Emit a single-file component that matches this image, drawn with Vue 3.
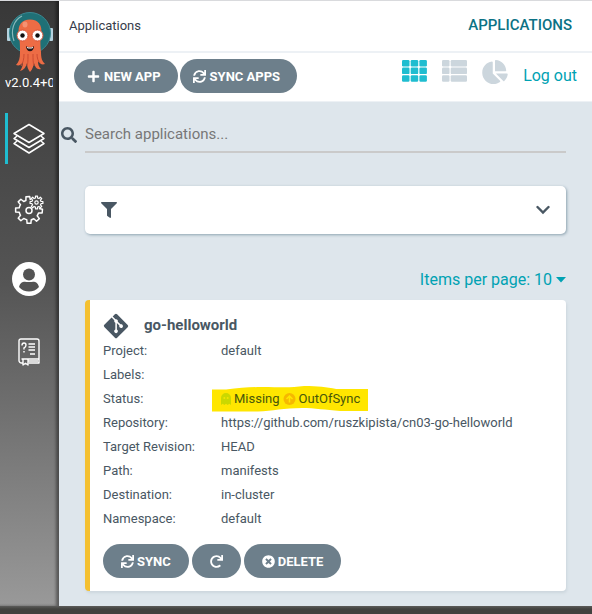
<script setup>
import { ref } from 'vue'

const query = ref('')

const icons = {
  plus: { box: '0 0 448 512', d: 'M416 208H272V64c0-17.67-14.33-32-32-32h-32c-17.67 0-32 14.33-32 32v144H32c-17.67 0-32 14.33-32 32v32c0 17.67 14.33 32 32 32h144v144c0 17.67 14.33 32 32 32h32c17.67 0 32-14.33 32-32V304h144c17.67 0 32-14.33 32-32v-32c0-17.67-14.33-32-32-32z' },
  sync: { box: '0 0 512 512', d: 'M440.65 12.57l4 82.77A247.16 247.16 0 0 0 255.83 8C134.73 8 33.91 94.92 12.29 209.82A12 12 0 0 0 24.09 224h49.05a12 12 0 0 0 11.67-9.26 175.91 175.91 0 0 1 317-56.94l-101.46-4.86a12 12 0 0 0-12.57 12v47.41a12 12 0 0 0 12 12H500a12 12 0 0 0 12-12V12a12 12 0 0 0-12-12h-47.37a12 12 0 0 0-11.98 12.57zM255.83 432a175.61 175.61 0 0 1-146-77.8l101.8 4.87a12 12 0 0 0 12.57-12v-47.4a12 12 0 0 0-12-12H12a12 12 0 0 0-12 12V500a12 12 0 0 0 12 12h47.35a12 12 0 0 0 12-12.6l-4.15-82.57A247.17 247.17 0 0 0 255.83 504c121.11 0 221.93-86.92 243.55-201.82a12 12 0 0 0-11.8-14.18h-49.05a12 12 0 0 0-11.67 9.26A175.86 175.86 0 0 1 255.83 432z' },
  redo: { box: '0 0 512 512', d: 'M500.33 0h-47.41a12 12 0 0 0-12 12.57l4 82.76A247.42 247.42 0 0 0 256 8C119.34 8 7.9 119.53 8 256.19 8.1 393.07 119.1 504 256 504a247.1 247.1 0 0 0 166.18-63.91 12 12 0 0 0 .48-17.43l-34-34a12 12 0 0 0-16.38-.55A176 176 0 1 1 402.1 157.8l-101.53-4.87a12 12 0 0 0-12.57 12v47.41a12 12 0 0 0 12 12h200.33a12 12 0 0 0 12-12V12a12 12 0 0 0-12-12z' },
  remove: { box: '0 0 512 512', d: 'M256 8C119 8 8 119 8 256s111 248 248 248 248-111 248-248S393 8 256 8zm121.6 313.1c4.7 4.7 4.7 12.3 0 17L338 377.6c-4.7 4.7-12.3 4.7-17 0L256 312l-65.1 65.6c-4.7 4.7-12.3 4.7-17 0L134.4 338c-4.7-4.7-4.7-12.3 0-17l65.6-65-65.6-65.1c-4.7-4.7-4.7-12.3 0-17l39.6-39.6c4.7-4.7 12.3-4.7 17 0l65 65.7 65.1-65.6c4.7-4.7 12.3-4.7 17 0l39.6 39.6c4.7 4.7 4.7 12.3 0 17L312 256l65.6 65.1z' },
}

// Outline of a gear: one trapezoid tooth per angle, in degrees, joined along the inner radius.
function gear(cx, cy, outer, inner, angles, inHalf, outHalf) {
  const at = (deg, r) => {
    const a = (deg * Math.PI) / 180
    return `${(cx + r * Math.cos(a)).toFixed(2)} ${(cy + r * Math.sin(a)).toFixed(2)}`
  }
  return angles
    .map((t, i) => `${i ? `A${inner} ${inner} 0 0 1 ` : 'M'}${at(t - inHalf, inner)}L${at(t - outHalf, outer)}L${at(t + outHalf, outer)}L${at(t + inHalf, inner)}`)
    .join('')
}
const bigGear = gear(15, 15, 13.5, 10, [5, 48, 90, 135, 180, 225, 265], 13, 8)
const smallGear = gear(22.5, 7.5, 6.5, 4.6, [0, 45, 90, 135, 180, 225, 270, 315], 13, 9) + 'z'

const toolbar = [
  { icon: 'plus', label: 'NEW APP' },
  { icon: 'sync', label: 'SYNC APPS' },
]

const actions = [
  { icon: 'sync', label: 'SYNC' },
  { icon: 'redo', label: '' },
  { icon: 'remove', label: 'DELETE' },
]

const details = [
  { name: 'Project:', value: 'default' },
  { name: 'Labels:', value: '' },
  { name: 'Status:', status: true },
  { name: 'Repository:', value: 'https://github.com/ruszkipista/cn03-go-helloworld' },
  { name: 'Target Revision:', value: 'HEAD' },
  { name: 'Path:', value: 'manifests' },
  { name: 'Destination:', value: 'in-cluster' },
  { name: 'Namespace:', value: 'default' },
]
</script>

<template>
  <div class="page">
    <div class="shell">
      <nav class="sidebar">
        <svg class="logo" viewBox="0 0 46 62" aria-hidden="true">
          <rect x="0" y="17" width="4" height="13" rx="1" fill="#b5d3df" />
          <rect x="42" y="17" width="4" height="13" rx="1" fill="#b5d3df" />
          <circle cx="23" cy="22" r="20.5" fill="#1f7076" stroke="#3b8791" />
          <path d="M7 30C3 19 7 9 15 5" fill="none" stroke="#8ab9bb" stroke-width="1.2" />
          <path d="M12 24C10 14 15 8.500 23 8.500s13 5.500 11 15.500c-1 7-.5 11 0 17 0 6 1 9 4 12-3 1-5 0-7-3 0 4 1 6 3 8-4 1-6-2-7-6-1 3-1 6-4 9-2-3-3-5-3-9-1 4-3 7-7 8 2-3 3-6 3-9-2 3-4 4-7 3 3-3 4-7 4-12 0-6 0-11-1-18z" fill="#ed6c45" />
          <path d="M17 43c0 5-1 9-3 12M21 43c0 6 0 9-1 12M26 43c0 5 0 9 1 12M30 43c0 4 1 7 3 9" fill="none" stroke="#cc4c32" stroke-width="1" />
          <ellipse cx="18" cy="13.500" rx="2.500" ry="3" fill="#f59272" />
          <circle cx="15.500" cy="24.500" r="5.500" fill="#fff" stroke="#d95438" />
          <circle cx="30.500" cy="24.500" r="5.500" fill="#fff" stroke="#d95438" />
          <circle cx="15.500" cy="24.500" r="2.200" fill="#111" />
          <circle cx="30.500" cy="24.500" r="2.200" fill="#111" />
          <path d="M19 35c3 2 5 2 8 0 0 7-8 7-8 0z" fill="#231719" />
          <path d="M20 36q3 1 6 0v1q-3 1-6 0z" fill="#fff" />
        </svg>
        <span class="version">v2.0.4+0</span>
        <a class="nav-item active" href="#applications" aria-label="Applications">
          <svg width="34" height="34" viewBox="0 0 34 34" fill="none" stroke="#fff" stroke-width="1.5" stroke-linejoin="round" stroke-linecap="round">
            <path d="M17 2.500L32 11.500 17 20.500 2 11.500z" />
            <path d="M4.500 14.500L2 16.500l15 9 15-9-2.500-2" />
            <path d="M4.500 19.500L2 21.500l15 9.500 15-9.500-2.500-2" />
          </svg>
        </a>
        <a class="nav-item" href="#settings" aria-label="Settings">
          <svg width="30" height="30" viewBox="0 0 30 30" fill="none" stroke="#fff" stroke-width="1.5" stroke-linejoin="round">
            <path :d="bigGear" />
            <circle cx="15" cy="15.500" r="3" />
            <path :d="smallGear" stroke-width="1.2" />
            <circle cx="22.500" cy="7.500" r="1.700" stroke-width="1.2" />
          </svg>
        </a>
        <a class="nav-item" href="#user" aria-label="User info">
          <svg width="34" height="38" viewBox="0 0 34 38">
            <circle cx="17" cy="17" r="17" fill="#fff" />
            <circle cx="17" cy="12.500" r="6" fill="#545454" />
            <path d="M7 25c2-7 6-5 10-5s8-2 10 5c-5 6-15 6-20 0z" fill="#545454" />
          </svg>
        </a>
        <a class="nav-item" href="#help" aria-label="Documentation">
          <svg width="22" height="28" viewBox="0 0 22 28" fill="none" stroke="#fff" stroke-width="1.4" stroke-linejoin="round">
            <path d="M5 25H3.500A2.500 2.500 0 0 1 1 22.500V3Q1 1 3 1h16q2 0 2 2v18H3.500M21 21v4H10.500M10 23h10" />
            <path d="M5 21v6l2.500-1.800L10 27v-6" />
            <path d="M4 7.500q0-2.500 2-2.500t2 2-2 3v1.500M6 13v1.500M10.500 6H17M10.500 9H17M10.500 12H17M12 16h5" />
          </svg>
        </a>
      </nav>

      <main class="main">
        <header class="topbar">
          <span class="crumb">Applications</span>
          <h1 class="title">APPLICATIONS</h1>
        </header>
        <div class="toolbar">
          <div class="buttons">
            <button v-for="b in toolbar" :key="b.label" class="btn" type="button">
              <svg class="icon" :viewBox="icons[b.icon].box"><path :d="icons[b.icon].d" /></svg>
              <span>{{ b.label }}</span>
            </button>
          </div>
          <div class="views">
            <button class="view selected" type="button" aria-label="Tiles">
              <svg width="25" height="22" viewBox="0 0 25 22">
                <template v-for="r in 3" :key="r">
                  <rect v-for="c in 3" :key="c" :x="(c - 1) * 8.7" :y="(r - 1) * 7.6" width="7.5" height="6.5" rx="1.2" />
                </template>
              </svg>
            </button>
            <button class="view" type="button" aria-label="List">
              <svg width="25" height="22" viewBox="0 0 25 22">
                <template v-for="r in 3" :key="r">
                  <rect x="0" :y="(r - 1) * 7.6" width="7.5" height="6.5" rx="1.2" />
                  <rect x="8.7" :y="(r - 1) * 7.6" width="16.3" height="6.5" rx="1.2" />
                </template>
              </svg>
            </button>
            <button class="view" type="button" aria-label="Summary">
              <svg width="26" height="24" viewBox="0 0 544 512">
                <path d="M527.79 288H290.5l158.03 158.03c6.04 6.04 15.98 6.53 22.19.68 38.7-36.46 65.32-85.61 73.13-140.86 1.34-9.46-6.51-17.85-16.06-17.85zm-15.83-64.8C503.72 103.74 408.26 8.28 288.8.04 279.68-.59 272 7.1 272 16.24V240h223.77c9.14 0 16.82-7.68 16.19-16.8zM224 288V50.71c0-9.55-8.39-17.4-17.84-16.06C86.99 51.49-4.1 155.6.14 280.37 4.5 408.51 114.83 513.59 243.03 511.98c50.4-.63 96.97-16.87 135.26-44.03 7.9-5.6 8.42-17.23 1.57-24.08L224 288z" />
              </svg>
            </button>
            <a class="logout" href="#logout">Log out</a>
          </div>
        </div>

        <div class="content">
          <div class="search">
            <label for="search" aria-label="Search">
              <svg width="16" height="16" viewBox="0 0 512 512"><path d="M505 442.7L405.3 343c-4.5-4.5-10.6-7-17-7H372c27.6-35.3 44-79.7 44-128C416 93.1 322.9 0 208 0S0 93.1 0 208s93.1 208 208 208c48.3 0 92.7-16.4 128-44v16.3c0 6.4 2.5 12.5 7 17l99.7 99.7c9.4 9.4 24.6 9.4 33.9 0l28.3-28.3c9.4-9.4 9.4-24.6.1-34zM208 336c-70.7 0-128-57.2-128-128 0-70.7 57.2-128 128-128 70.7 0 128 57.2 128 128 0 70.7-57.2 128-128 128z" /></svg>
            </label>
            <input id="search" v-model="query" type="text" placeholder="Search applications..." />
          </div>

          <button class="filter" type="button" aria-label="Filters">
            <svg width="16" height="16" viewBox="0 0 512 512"><path fill="#495763" d="M487.976 0H24.028C2.71 0-8.047 25.866 7.058 40.971L192 225.941V432c0 7.831 3.821 15.17 10.237 19.662l80 55.98C298.02 518.69 320 507.493 320 487.98V225.941l184.947-184.97C520.021 25.896 509.338 0 487.976 0z" /></svg>
            <svg width="14" height="10" viewBox="0 0 14 10"><path d="M1.500 2L7 7.500 12.500 2" fill="none" stroke="#495763" stroke-width="2.4" stroke-linecap="round" /></svg>
          </button>

          <button class="pager" type="button">
            <span>Items per page: 10</span>
            <svg width="10" height="6" viewBox="0 0 10 6"><path d="M0 0h10L5 5.500z" fill="currentColor" /></svg>
          </button>

          <article class="card">
            <div class="card-head">
              <svg width="26" height="26" viewBox="0 16 448 480"><path fill="#495763" d="M439.55 236.05L244 40.45a28.87 28.87 0 0 0-40.81 0l-40.66 40.63 51.52 51.52c27.06-9.14 52.68 16.77 43.39 43.68l49.66 49.66c34.23-11.8 61.18 31 35.47 56.69-26.49 26.49-70.21-2.87-56-37.34L240.22 199v121.85c25.3 12.54 22.26 41.85 9.08 55a34.34 34.34 0 0 1-48.55 0c-17.57-17.6-11.07-46.91 11.25-56v-123c-20.8-8.51-24.6-30.74-18.64-45L142.57 101 8.45 235.14a28.86 28.86 0 0 0 0 40.81l195.61 195.6a28.86 28.86 0 0 0 40.8 0l194.69-194.69a28.86 28.86 0 0 0 0-40.81z" /></svg>
              <h2>go-helloworld</h2>
            </div>
            <dl>
              <div v-for="d in details" :key="d.name" class="row">
                <dt>{{ d.name }}</dt>
                <dd v-if="d.status" class="status">
                  <svg class="marker" viewBox="0 0 156 26" preserveAspectRatio="none" aria-hidden="true"><path d="M0 3.500h14C28 2 38 1 50 1c18 0 28 1 42-1 14 0 22 1 32 3h32v22h-28c-15-1-25-3-38-3-18 0-30 3-44 3.500H0z" fill="#ffe600" /></svg>
                  <svg width="10" height="12" viewBox="0 0 10 12"><path d="M0 12V5a5 5 0 0 1 10 0v7l-1.700-1.200L6.700 12 5 10.800 3.300 12l-1.600-1.200z" fill="#cbd800" /><circle cx="3.300" cy="5" r="1" fill="#f3e500" /><circle cx="6.700" cy="5" r="1" fill="#f3e500" /></svg>
                  <span>Missing</span>
                  <svg width="13" height="12" viewBox="0 0 13 12"><circle cx="6.500" cy="6" r="6" fill="#f6b800" /><path d="M6.500 9.500V3M3.500 6l3-3 3 3" fill="none" stroke="#ffe600" stroke-width="1.5" /></svg>
                  <span>OutOfSync</span>
                </dd>
                <dd v-else>{{ d.value }}</dd>
              </div>
            </dl>
            <div class="actions">
              <button v-for="a in actions" :key="a.icon" class="btn compact" type="button" :aria-label="a.label || 'Refresh'">
                <svg class="icon" :viewBox="icons[a.icon].box"><path :d="icons[a.icon].d" /></svg>
                <span v-if="a.label">{{ a.label }}</span>
              </button>
            </div>
          </article>
        </div>
      </main>
    </div>
    <div class="edge"></div>
  </div>
</template>

<style>
body {
  margin: 0;
}
</style>

<style scoped>
* {
  box-sizing: border-box;
}
.page {
  min-height: 100vh;
  display: flex;
  flex-direction: column;
  font-family: Roboto, "Liberation Sans", sans-serif;
  color: #495763;
  border-top: 1px solid #d9dadd;
}
.shell {
  flex: 1;
  display: flex;
}
.edge {
  height: 8px;
  background: linear-gradient(#5c5c5a, #42423f 3px);
}
button {
  font: inherit;
  border: 0;
  margin: 0;
  padding: 0;
  cursor: pointer;
}
svg {
  display: block;
  flex: none;
}
.sidebar {
  width: 59px;
  flex: none;
  display: flex;
  flex-direction: column;
  align-items: center;
  padding-top: 10px;
  background: linear-gradient(#383838, #545454 46%, #999);
  box-shadow: inset -3px 0 3px rgba(0, 0, 0, 0.4);
}
.logo {
  width: 46px;
  height: 62px;
}
.version {
  align-self: stretch;
  margin: 0 6px 0 5px;
  overflow: hidden;
  white-space: nowrap;
  font-size: 13px;
  line-height: 20px;
  color: #fff;
}
.nav-item {
  align-self: stretch;
  height: 51px;
  margin: 0 0 20px 5px;
  padding-right: 6px;
  display: flex;
  align-items: center;
  justify-content: center;
}
.nav-item.active {
  margin-top: 20px;
  border-left: 3px solid #1fbdd0;
  padding-right: 9px;
}
.main {
  flex: 1;
  min-width: 0;
  display: flex;
  flex-direction: column;
  background: #dee6ec;
}
.topbar {
  height: 52px;
  padding: 0 20px 2px 10px;
  display: flex;
  align-items: center;
  justify-content: space-between;
  background: #fff;
  border-bottom: 2px solid #edf1f5;
}
.crumb {
  font-size: 13px;
  color: #363c4a;
}
.title {
  margin: 0;
  font-size: 15px;
  font-weight: 500;
  color: #0b7285;
}
.toolbar {
  height: 49px;
  padding: 0 15px 2px;
  display: flex;
  align-items: center;
  justify-content: space-between;
  background: #fff;
  border-bottom: 1px solid #edf1f5;
}
.buttons {
  display: flex;
  gap: 2px;
}
.btn {
  height: 34px;
  padding: 0 17px 0 13px;
  display: flex;
  align-items: center;
  gap: 4px;
  border-radius: 17px;
  background: #6d7f8b;
  color: #fff;
  font-size: 13px;
  font-weight: 700;
}
.btn.compact {
  padding: 0 18px;
}
.btn.compact .icon {
  margin-right: -1px;
}
.btn.compact .icon:only-child {
  margin: 0;
}
.icon {
  width: 13px;
  height: 13px;
  fill: currentColor;
}
.views {
  display: flex;
  align-items: flex-start;
  gap: 15px;
}
.view {
  height: 30px;
  display: flex;
  align-items: flex-start;
  background: none;
  fill: #ccd6dd;
}
.view.selected {
  fill: #1fbdd0;
}
.logout {
  color: #00a2b3;
  font-size: 16px;
  line-height: 32px;
  text-decoration: none;
}
.content {
  padding: 15px 26px;
  display: flex;
  flex-direction: column;
}
.search {
  display: flex;
  align-items: center;
  gap: 8px;
  margin-left: -24px;
}
.search svg {
  fill: #495763;
}
.search input {
  flex: 1;
  min-width: 0;
  height: 36px;
  padding: 0;
  border: 0;
  border-bottom: 2px solid #cacaca;
  background: none;
  font: inherit;
  font-size: 15px;
  color: #495763;
  outline: 0;
}
.search input::placeholder {
  color: #777;
  opacity: 1;
}
.filter {
  height: 48px;
  margin-top: 33px;
  padding: 0 16px;
  display: flex;
  align-items: center;
  justify-content: space-between;
  background: #fff;
  border-radius: 5px;
  box-shadow: 1px 1px 3px #8fa4b1;
}
.pager {
  align-self: flex-end;
  margin: 34px 0 8px;
  display: flex;
  align-items: center;
  gap: 4px;
  background: none;
  color: #00a2b3;
  font-size: 16px;
  line-height: 24px;
}
.card {
  padding: 13px;
  background: #fff;
  border-left: 5px solid #f4c030;
  border-radius: 4px;
  box-shadow: 1px 2px 3px #ccd6dd;
}
.card-head {
  display: flex;
  align-items: flex-start;
  gap: 15px;
  height: 26px;
}
.card-head h2 {
  margin: 0;
  font-size: 15px;
  line-height: 24px;
  font-weight: 700;
}
dl {
  margin: 0;
  font-size: 13px;
  line-height: 24px;
}
.row {
  display: flex;
  height: 24px;
}
dt {
  width: 118px;
  flex: none;
}
dd {
  margin: 0;
}
.status {
  position: relative;
  display: flex;
  align-items: center;
  gap: 3px;
  color: #47560a;
}
.status > * {
  position: relative;
}
.status .marker {
  position: absolute;
  left: -9px;
  top: -1px;
  width: calc(100% + 17px);
  height: 26px;
}
.actions {
  display: flex;
  gap: 3px;
  margin-top: 13px;
}
</style>
